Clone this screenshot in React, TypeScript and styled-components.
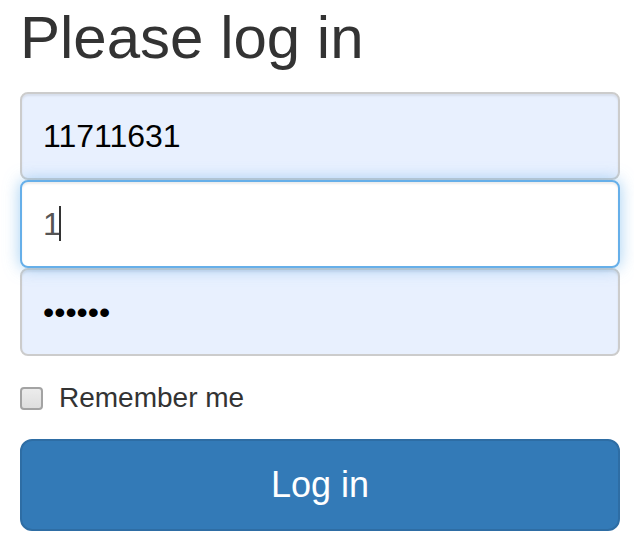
import React from "react";
import styled, { createGlobalStyle } from "styled-components";

const Global = createGlobalStyle`
  html, body { margin: 0; padding: 0; background: #fff; }
  body { font-family: "Liberation Sans", Arial, sans-serif; color: #333; }
  * { box-sizing: border-box; }
`;

const Form = styled.form`
  width: 634px;
  padding: 5px 14px 0 20px;
  display: flex;
  flex-direction: column;
`;

const Heading = styled.h2`
  margin: 0 0 21px;
  font-size: 60px;
  line-height: 66px;
  font-weight: 500;
  color: #333;
`;

const Field = styled.div<{ $focused?: boolean }>`
  position: relative;
  z-index: ${(p) => (p.$focused ? 2 : 1)};
`;

const Input = styled.input<{ $focused?: boolean }>`
  display: block;
  width: 600px;
  height: 88px;
  margin: 0;
  padding: 0 18px 0 21px;
  font-family: "Liberation Sans", Arial, sans-serif;
  font-size: 32px;
  border-radius: 8px;
  outline: none;
  caret-color: transparent;
  border: 2px solid ${(p) => (p.$focused ? "#66afe9" : "#ccc")};
  background: ${(p) => (p.$focused ? "#fff" : "#e8f0fe")};
  color: ${(p) => (p.$focused ? "#555" : "#000")};
  box-shadow: ${(p) =>
    p.$focused
      ? "inset 0 2px 2px rgba(0,0,0,.075), 0 0 16px rgba(102,175,233,.6)"
      : "inset 0 2px 2px rgba(0,0,0,.075)"};
`;

const Caret = styled.span`
  position: absolute;
  left: 39px;
  top: 26px;
  width: 2px;
  height: 35px;
  background: #333;
`;

const CheckRow = styled.label`
  display: flex;
  align-items: center;
  gap: 16px;
  height: 40px;
  margin: 22px 0 21px;
  font-size: 28px;
  color: #333;
`;

const Box = styled.span`
  width: 23px;
  height: 23px;
  border: 2px solid #a3a3a3;
  border-radius: 4px;
  background: linear-gradient(#ececec, #dedede);
`;

const Button = styled.button`
  width: 600px;
  height: 92px;
  border: 2px solid #2e6da4;
  border-radius: 12px;
  background: #337ab7;
  color: #fff;
  font-family: "Liberation Sans", Arial, sans-serif;
  font-size: 36px;
  line-height: 48px;
  cursor: pointer;
`;

export default function App() {
  return (
    <>
      <Global />
      <Form onSubmit={(e) => e.preventDefault()}>
        <Heading>Please log in</Heading>
        <Field>
          <Input type="text" defaultValue="11711631" readOnly />
        </Field>
        <Field $focused>
          <Input $focused type="text" defaultValue="1" readOnly />
          <Caret />
        </Field>
        <Field>
          <Input type="password" defaultValue="123456" readOnly />
        </Field>
        <CheckRow>
          <Box />
          Remember me
        </CheckRow>
        <Button type="submit">Log in</Button>
      </Form>
    </>
  );
}
